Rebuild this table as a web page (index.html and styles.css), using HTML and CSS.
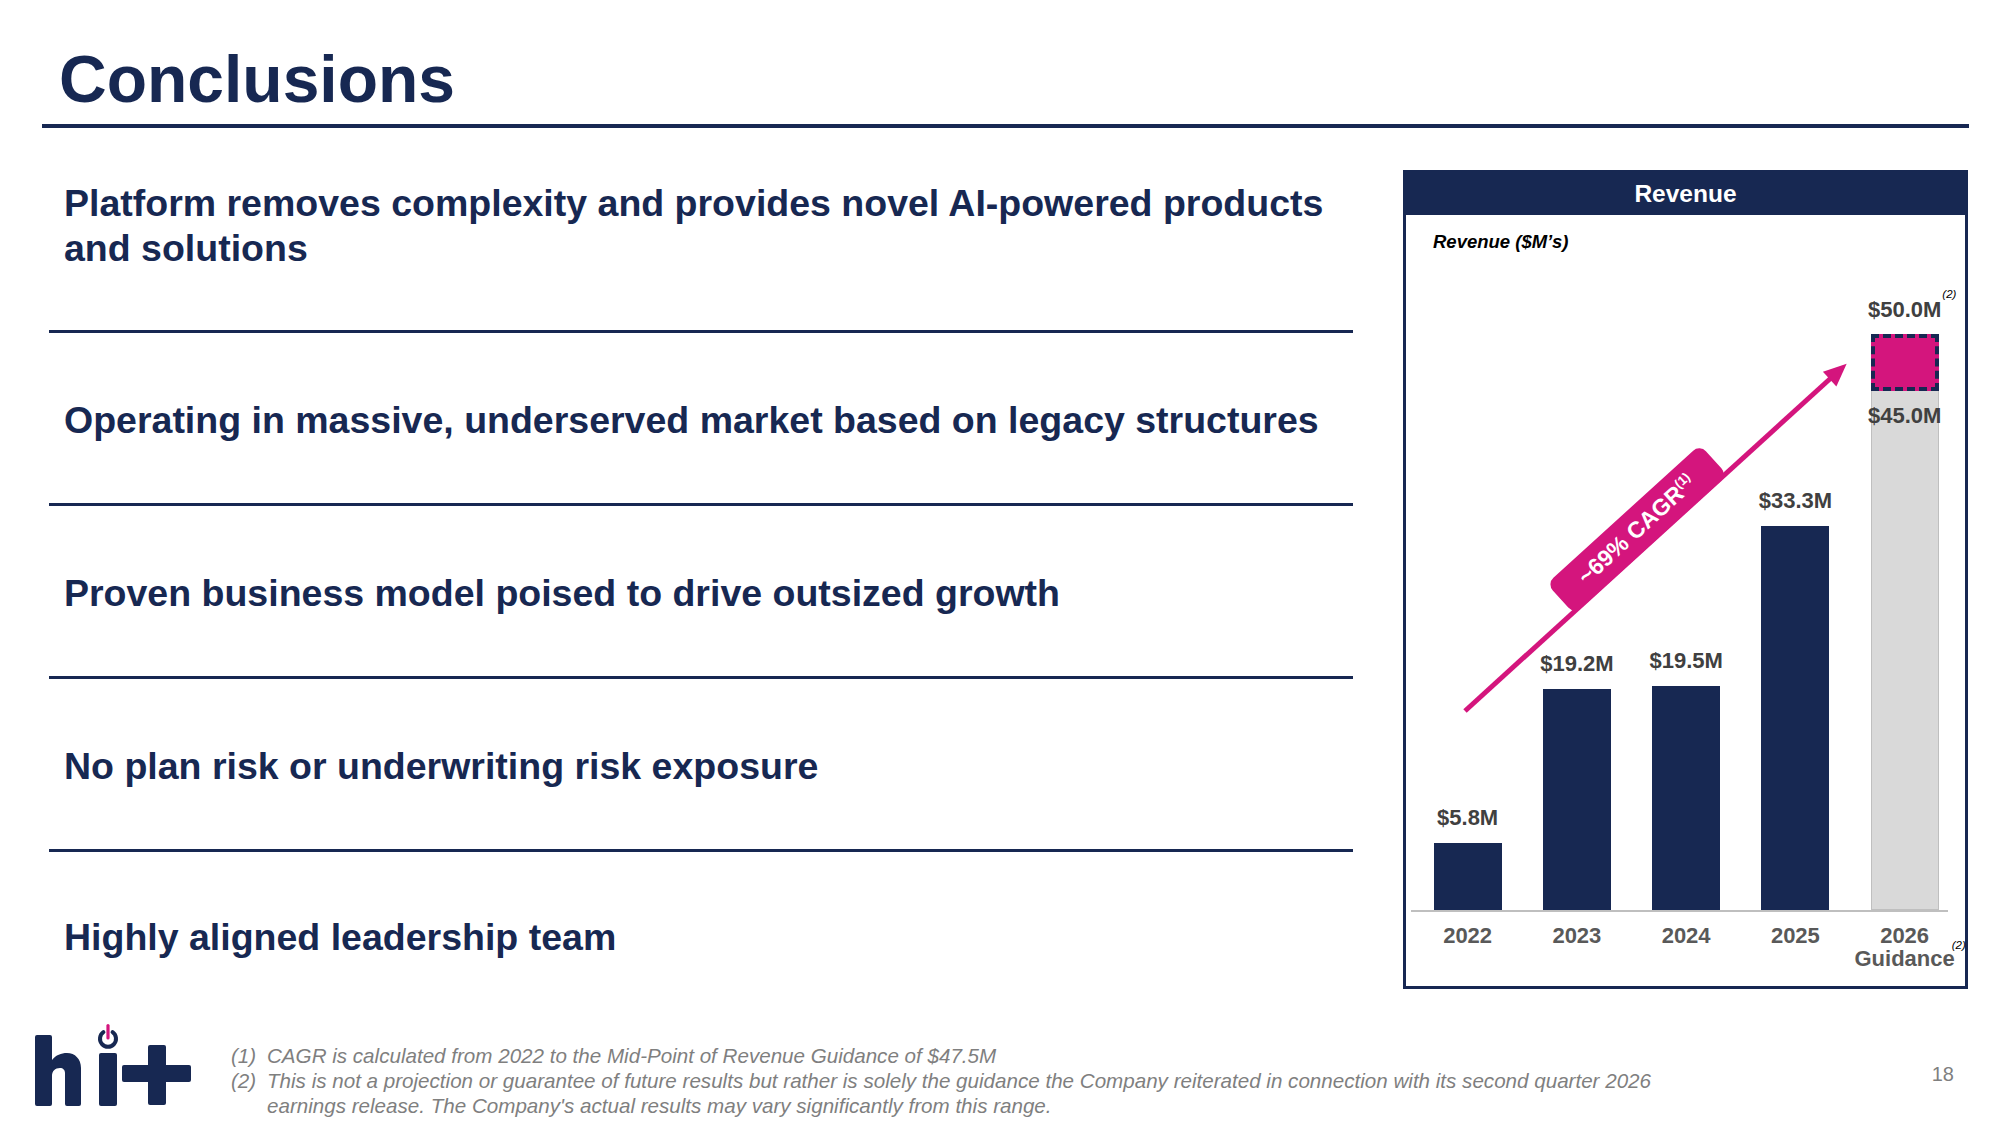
FILE: index.html
```html
<!DOCTYPE html>
<html lang="en">
<head>
<meta charset="utf-8">
<title>Conclusions</title>
<link rel="stylesheet" href="styles.css">
</head>
<body>
<div class="slide">
  <header class="head">
    <h1 class="title">Conclusions</h1>
  </header>

  <div class="main">
    <ul class="points">
      <li class="point"><span>Platform removes complexity and provides novel AI-powered products<br>and solutions</span></li>
      <li class="point"><span>Operating in massive, underserved market based on legacy structures</span></li>
      <li class="point"><span>Proven business model poised to drive outsized growth</span></li>
      <li class="point"><span>No plan risk or underwriting risk exposure</span></li>
      <li class="point"><span>Highly aligned leadership team</span></li>
    </ul>

    <section class="panel">
      <div class="panel-head">Revenue</div>
      <div class="panel-body">
        <div class="axis-title">Revenue ($M’s)</div>
        <div class="plot">
          <div class="slot">
            <div class="val">$5.8M</div>
            <div class="bar" style="height:67px"></div>
          </div>
          <div class="slot">
            <div class="val">$19.2M</div>
            <div class="bar" style="height:221px"></div>
          </div>
          <div class="slot">
            <div class="val">$19.5M</div>
            <div class="bar" style="height:224px"></div>
          </div>
          <div class="slot">
            <div class="val">$33.3M</div>
            <div class="bar" style="height:384px"></div>
          </div>
          <div class="slot">
            <div class="val val-top">$50.0M<sup class="note-ref">(2)</sup></div>
            <div class="target"></div>
            <div class="bar guide" style="height:519px"><span class="inner-val">$45.0M</span></div>
          </div>
        </div>
        <div class="axis"></div>
        <div class="years">
          <div class="year">2022</div>
          <div class="year">2023</div>
          <div class="year">2024</div>
          <div class="year">2025</div>
          <div class="year">2026<br><span class="guid">Guidance<sup class="note-ref">(2)</sup></span></div>
        </div>
      </div>
      <svg class="cagr" viewBox="1403 170 565 819" width="565" height="819">
        <g transform="translate(1465 711) rotate(-42.3)">
          <line x1="0" y1="0" x2="497" y2="0" stroke="#d4157d" stroke-width="5"/>
          <polygon points="493,-10 516,0 493,10" fill="#d4157d"/>
          <rect x="146" y="-39" width="207" height="41" rx="9" ry="9" fill="#d4157d"/>
          <text x="249" y="-11" text-anchor="middle" class="cagr-text">~69% CAGR<tspan class="cagr-sup" dy="-9">(1)</tspan></text>
        </g>
      </svg>
    </section>
  </div>

  <footer class="foot">
    <svg class="logo" viewBox="30 1022 165 90" width="165" height="90">
      <path d="M35 1037 Q35 1035 37 1035 H50 Q52 1035 52 1037 V1060 C56 1055 61 1053 67 1053 C75 1053 81 1059 81 1068 V1104 Q81 1106 79 1106 H67 Q65 1106 65 1104 V1073 C65 1070 63 1068 60 1068 C55 1068 52 1071 52 1076 V1104 Q52 1106 50 1106 H37 Q35 1106 35 1104 Z" fill="#172852"/>
      <rect x="99" y="1053" width="18" height="53" rx="2" fill="#172852"/>
      <path d="M103.4 1032.2 A8 8 0 1 0 112.6 1032.2" fill="none" stroke="#172852" stroke-width="4" stroke-linecap="round"/>
      <line x1="108" y1="1025.5" x2="108" y2="1038" stroke="#d4157d" stroke-width="3.2" stroke-linecap="round"/>
      <rect x="122" y="1065" width="69" height="17" rx="2" fill="#172852"/>
      <rect x="148" y="1045" width="18" height="60" rx="2" fill="#172852"/>
    </svg>
    <div class="notes">
      <div class="note"><span class="num">(1)</span><span class="txt">CAGR is calculated from 2022 to the Mid-Point of Revenue Guidance of $47.5M</span></div>
      <div class="note"><span class="num">(2)</span><span class="txt">This is not a projection or guarantee of future results but rather is solely the guidance the Company reiterated in connection with its second quarter 2026<br>earnings release. The Company's actual results may vary significantly from this range.</span></div>
    </div>
    <div class="page">18</div>
  </footer>
</div>
</body>
</html>
```

FILE: styles.css
```css
* { box-sizing: border-box; }
html, body { margin: 0; padding: 0; }
body {
  width: 2000px;
  height: 1125px;
  overflow: hidden;
  background: #ffffff;
  font-family: "Liberation Sans", Arial, Helvetica, sans-serif;
  color: #172852;
}
.slide {
  width: 2000px;
  height: 1125px;
  display: flex;
  flex-direction: column;
}

/* header */
.head {
  margin-left: 42px;
  width: 1927px;
  height: 128px;
  flex: none;
  border-bottom: 4px solid #172852;
  padding: 46px 0 0 17px;
}
.title {
  margin: 0;
  font-size: 66px;
  line-height: 66px;
  font-weight: 700;
  color: #172852;
}

/* main */
.main {
  display: flex;
  height: 898px;
  flex: none;
}
.points {
  list-style: none;
  margin: 0 0 0 49px;
  padding: 0;
  width: 1304px;
  flex: none;
}
.point {
  height: 173px;
  border-bottom: 3px solid #172852;
  display: flex;
  align-items: center;
  padding-left: 15px;
  padding-top: 4px;
  font-size: 37.5px;
  line-height: 45px;
  font-weight: 700;
  color: #172852;
}
.point:first-child {
  height: 205px;
  align-items: flex-start;
  padding-top: 53px;
}
.point:last-child {
  border-bottom: none;
  padding-top: 0;
  padding-bottom: 2px;
}

/* revenue panel */
.panel {
  position: relative;
  margin: 42px 0 0 50px;
  width: 565px;
  height: 819px;
  flex: none;
  border: 3px solid #172852;
  display: flex;
  flex-direction: column;
  background: #fff;
}
.panel-head {
  height: 42px;
  flex: none;
  background: #172852;
  color: #ffffff;
  font-size: 24.5px;
  font-weight: 700;
  display: flex;
  align-items: center;
  justify-content: center;
}
.panel-body {
  flex: 1;
  padding-top: 17px;
  display: flex;
  flex-direction: column;
}
.axis-title {
  margin-left: 27px;
  font-size: 18.5px;
  line-height: 20px;
  font-weight: 700;
  font-style: italic;
  color: #000;
}
.plot {
  height: 658px;
  display: flex;
  align-items: flex-end;
  padding-left: 7px;
}
.slot {
  width: 109.25px;
  flex: none;
  display: flex;
  flex-direction: column;
  align-items: center;
}
.val {
  position: relative;
  font-size: 22px;
  line-height: 26px;
  font-weight: 700;
  color: #404040;
  margin-bottom: 12px;
  white-space: nowrap;
}
.val-top { margin-bottom: 11px; }
.note-ref {
  position: absolute;
  left: 100%;
  top: -8px;
  font-size: 11.5px;
  line-height: 11px;
  font-style: italic;
  font-weight: 400;
  color: #000;
  padding-left: 1px;
}
.bar {
  width: 68px;
  background: #172852;
}
.target {
  width: 68px;
  height: 57px;
  background: #d4157d;
  border: 4px dashed #172852;
}
.bar.guide {
  background: #d9d9d9;
  border: 1px solid #bfbfbf;
  border-top: none;
  display: flex;
  justify-content: center;
  padding-top: 12px;
}
.inner-val {
  font-size: 22px;
  line-height: 26px;
  font-weight: 700;
  color: #404040;
  white-space: nowrap;
}
.axis {
  margin-left: 5px;
  width: 537px;
  height: 2px;
  background: #bfbfbf;
  flex: none;
}
.years {
  display: flex;
  padding-left: 7px;
  margin-top: 12px;
}
.year {
  width: 109.25px;
  flex: none;
  text-align: center;
  font-size: 22px;
  line-height: 23px;
  font-weight: 700;
  color: #595959;
}
.guid { position: relative; }
.guid .note-ref { top: -6px; left: calc(100% - 4px); }

.cagr {
  position: absolute;
  left: -3px;
  top: -3px;
  pointer-events: none;
}
.cagr-text {
  font-family: "Liberation Sans", Arial, sans-serif;
  font-size: 23px;
  font-weight: 700;
  fill: #ffffff;
}
.cagr-sup { font-size: 13px; }

/* footer */
.foot {
  flex: 1;
  display: flex;
  align-items: flex-start;
  padding-left: 30px;
}
.logo {
  flex: none;
  margin-top: -4px;
}
.notes {
  margin-left: 36px;
  margin-top: 17px;
  font-size: 20.6px;
  line-height: 25px;
  font-style: italic;
  color: #7f7f7f;
}
.note { display: flex; }
.num { width: 36px; flex: none; }
.page {
  margin-left: auto;
  margin-right: 46px;
  margin-top: 36px;
  font-size: 20px;
  line-height: 24px;
  color: #7f7f7f;
}
```
